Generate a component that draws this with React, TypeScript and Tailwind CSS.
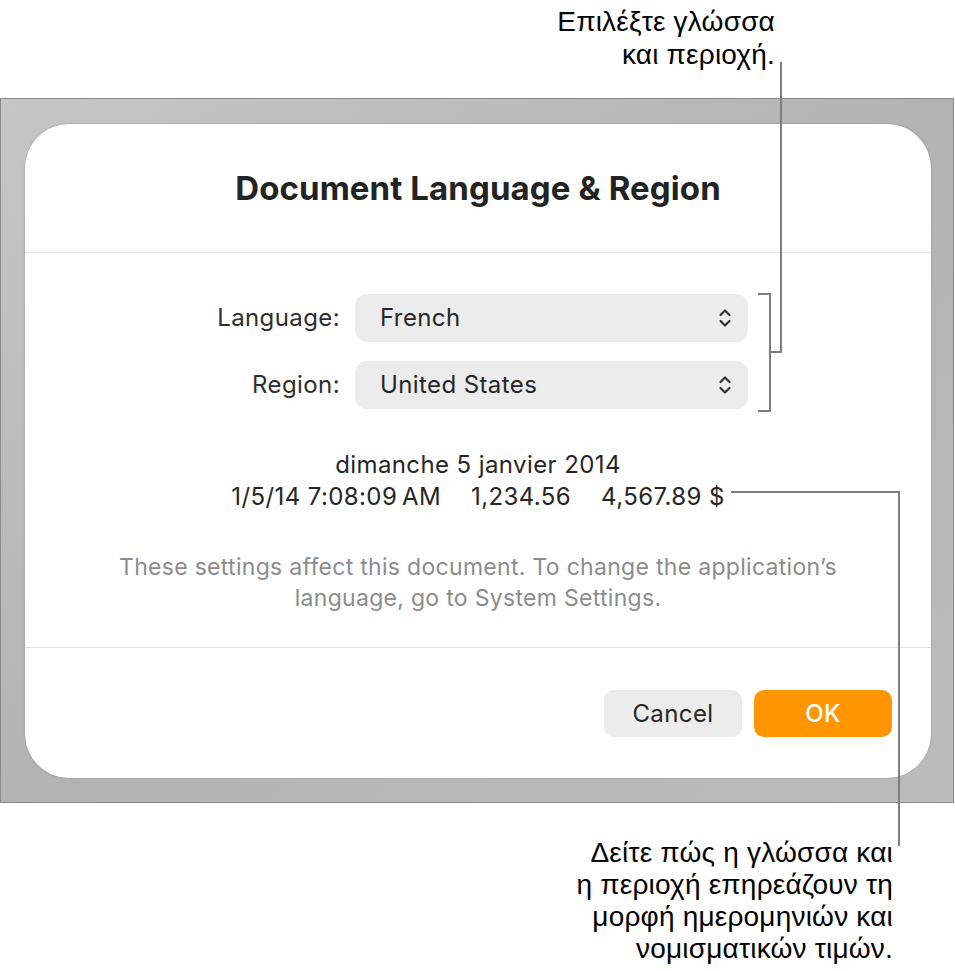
import React from "react";

const sans = { fontFamily: "Inter, 'Noto Sans', sans-serif" };
const callout = { fontFamily: "'Liberation Sans', Arial, sans-serif" };

function Chevrons() {
  return (
    <svg width="14" height="22" viewBox="0 0 14 22" fill="none" stroke="#333333" strokeWidth="2.2" strokeLinecap="round" strokeLinejoin="round">
      <path d="M2.5 8 L7 3.5 L11.5 8" />
      <path d="M2.5 14 L7 18.5 L11.5 14" />
    </svg>
  );
}

function Popup({ label, value }: { label: string; value: string }) {
  return (
    <div className="flex items-center">
      <div className="w-[330px] pr-[15px] text-right text-[24px] tracking-[0.4px] text-[#2e2e2e]">{label}</div>
      <div className="flex h-[48px] w-[393px] items-center justify-between rounded-[12px] bg-[#ececec] pl-[25px] pr-[16px] text-[24px] tracking-[0.4px] text-[#262626]">
        <span>{value}</span>
        <Chevrons />
      </div>
    </div>
  );
}

export default function App() {
  return (
    <div className="relative h-[971px] w-[955px] overflow-hidden bg-white" style={sans}>
      {/* top callout */}
      <div className="h-[98px] pr-[180px] pt-[5px] text-right text-[28px] leading-[33px] tracking-[0.2px] text-black" style={callout}>
        <div>Επιλέξτε γλώσσα</div>
        <div>και περιοχή.</div>
      </div>

      {/* window frame */}
      <div className="h-[705px] w-[954px] border border-[#8a8a8a] bg-gradient-to-br from-[#c6c6c6] via-[#b3b3b3] to-[#bcbcbc] pl-[24px] pr-[22px] pt-[25px] pb-[24px]">
        <div className="flex h-full flex-col rounded-[44px] bg-white shadow-[0_0_2px_rgba(0,0,0,0.25)]">
          <div className="flex h-[129px] items-center justify-center border-b border-[#e3e3e3] pt-[2px]">
            <h1 className="text-[33px] font-bold tracking-[0.1px] text-[#232323]">Document Language &amp; Region</h1>
          </div>

          <div className="flex h-[395px] flex-col border-b border-[#e3e3e3] pt-[41px]">
            <div className="flex flex-col gap-[19px]">
              <Popup label="Language:" value="French" />
              <Popup label="Region:" value="United States" />
            </div>
            <div className="mt-[40px] flex flex-col items-center text-[24px] leading-[32px] tracking-[0.4px] text-[#262626]">
              <div>dimanche 5 janvier 2014</div>
              <div className="flex gap-[30px]">
                <span>1/5/14 7:08:09{"\u202F"}AM</span>
                <span>1,234.56</span>
                <span>4,567.89 $</span>
              </div>
            </div>
            <p className="mt-[39px] text-center text-[23px] leading-[31px] tracking-[0.3px] text-[#8c8c8c]">
              These settings affect this document. To change the application’s
              <br />
              language, go to System Settings.
            </p>
          </div>

          <div className="flex flex-1 justify-end gap-[12px] pr-[39px] pt-[42px]">
            <button className="h-[47px] w-[138px] rounded-[10px] bg-[#ececec] text-[24px] tracking-[0.4px] text-[#262626]">Cancel</button>
            <button className="h-[47px] w-[138px] rounded-[10px] bg-[#ff9500] text-[24px] font-medium tracking-[0.4px] text-white">OK</button>
          </div>
        </div>
      </div>

      {/* bottom callout */}
      <div className="pr-[62px] pt-[34px] text-right text-[28px] leading-[32px] tracking-[0.2px] text-black" style={callout}>
        <div>Δείτε πώς η γλώσσα και</div>
        <div>η περιοχή επηρεάζουν τη</div>
        <div>μορφή ημερομηνιών και</div>
        <div>νομισματικών τιμών.</div>
      </div>

      {/* callout lines */}
      <svg className="pointer-events-none absolute left-0 top-0" width="955" height="971" fill="none" stroke="#7d7d7d" strokeWidth="2">
        <path d="M781 62 V352 H770" />
        <path d="M758 294 H770 V411 H758" />
        <path d="M731 492 H899 V846" />
      </svg>
    </div>
  );
}
